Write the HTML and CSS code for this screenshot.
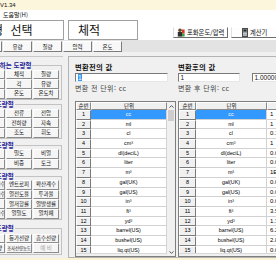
FILE: index.html
```html
<!DOCTYPE html>
<html lang="ko">
<head>
<meta charset="utf-8">
<title>단위 변환기</title>
<link rel="stylesheet" href="styles.css">
</head>
<body>
<div class="titlebar">V1.34</div>
<div class="menubar">도움말(H)</div>

<div class="header">
	<div class="hbox sel"><span>도량형 선택</span></div>
	<div class="hbox cur">체적</div>
	<div class="hbtns">
		<button class="hbtn sat">
			<svg width="8" height="9" viewBox="0 0 8 9"><circle cx="3" cy="2.2" r="1.8" fill="#6b4a2a"/><rect x="0.8" y="4" width="4.4" height="4.6" fill="#2f2f2f"/><rect x="5" y="1.5" width="2.6" height="4" fill="#d83a2a"/><rect x="5" y="5.5" width="2.6" height="3" fill="#3aa03a"/></svg>
			포화온도/압력
		</button>
		<button class="hbtn calc">
			<svg width="6" height="9" viewBox="0 0 6 9"><rect x="0.5" y="0.5" width="5" height="8" fill="#9a9a9a" stroke="#4a4a4a"/><rect x="1.5" y="1.5" width="3" height="2" fill="#2a2a2a"/><path d="M1.5 5.3h1M3.5 5.3h1M1.5 7.1h1M3.5 7.1h1" stroke="#fff"/></svg>
			계산기
		</button>
	</div>
</div>

<div class="tabs">
	<button class="tab cut">길이</button>
	<button class="tab">유량</button>
	<button class="tab">질량</button>
	<button class="tab">압력</button>
	<button class="tab">온도</button>
</div>

<div class="main">
	<div class="left">
		<div class="group g1">
			<div class="gtitle">자주 사용하는 도량형</div>
			<div class="gbtns">
				<button>길이</button><button>체적</button><button>질량</button>
				<button>면적</button><button>각</button><button>유량</button>
				<button>속도</button><button>온도</button><button>온도차</button>
			</div>
		</div>
		<div class="group g2">
			<div class="gtitle">전기 도량형</div>
			<div class="gbtns">
				<button>전력</button><button>전류</button><button>전압</button>
				<button>저항</button><button>전하량</button><button>자속</button>
				<button>광도</button><button>조도</button><button>휘도</button>
			</div>
		</div>
		<div class="group">
			<div class="gtitle">물성 도량형</div>
			<div class="gbtns">
				<button>점도</button><button>밀도</button><button>비열</button>
				<button>열량</button><button>비중</button><button>토크</button>
			</div>
		</div>
		<div class="group">
			<div class="gtitle">열전 도량형</div>
			<div class="gbtns">
				<button>열전달계수</button><button>엔트로피</button><button>확산계수</button>
				<button>열팽창계수</button><button>열전도율</button><button>투과율</button>
				<button>열용량</button><button>열저항률</button><button>열발생률</button>
				<button>열흡수계수</button><button>열밀도</button><button>열차폐</button>
			</div>
		</div>
		<div class="group g5">
			<div class="gtitle">방사 도량형</div>
			<div class="gbtns">
				<button>방사능</button><button>등가선량</button><button>흡수선량</button>
				<button>조사선량</button><button class="small">조사선량농도</button><button class="off">예 비</button>
			</div>
		</div>
	</div>

	<div class="right">
		<div class="inputs">
			<div class="ival">
				<div class="ilabel">변환전의 값</div>
				<div class="ibox"><span class="isel">1</span></div>
				<div class="iunit">변환 전 단위: cc</div>
			</div>
			<div class="ival2">
				<div class="ilabel">변환후의 값</div>
				<div class="irow">
					<div class="ibox b2">1</div>
					<div class="ibox b3">1.000000E+00</div>
				</div>
				<div class="iunit">변환 후 단위: cc</div>
			</div>
		</div>

		<div class="tables">
			<div class="tbl tbl-l">
				<div class="tcols">
					<div class="thead"><div class="th">순번</div><div class="th">단위</div></div>
					<div class="tbody">
						<div class="tr sel"><div class="td no">1</div><div class="td unit">cc</div></div>
						<div class="tr"><div class="td no">2</div><div class="td unit">ml</div></div>
						<div class="tr"><div class="td no">3</div><div class="td unit">cl</div></div>
						<div class="tr"><div class="td no">4</div><div class="td unit">cm³</div></div>
						<div class="tr"><div class="td no">5</div><div class="td unit">dl(deciL)</div></div>
						<div class="tr"><div class="td no">6</div><div class="td unit">liter</div></div>
						<div class="tr"><div class="td no">7</div><div class="td unit">m³</div></div>
						<div class="tr"><div class="td no">8</div><div class="td unit">gal(UK)</div></div>
						<div class="tr"><div class="td no">9</div><div class="td unit">gal(US)</div></div>
						<div class="tr"><div class="td no">10</div><div class="td unit">in³</div></div>
						<div class="tr"><div class="td no">11</div><div class="td unit">ft³</div></div>
						<div class="tr"><div class="td no">12</div><div class="td unit">yd³</div></div>
						<div class="tr"><div class="td no">13</div><div class="td unit">barrel(US)</div></div>
						<div class="tr"><div class="td no">14</div><div class="td unit">bushel(US)</div></div>
						<div class="tr"><div class="td no">15</div><div class="td unit">liq.qt(US)</div></div>
					</div>
					<div class="hbar"></div>
				</div>
				<div class="vscroll">
					<div class="arrow"><svg width="5" height="3" viewBox="0 0 5 3"><path d="M0.5 2.6L2.5 0.6L4.5 2.6" fill="none" stroke="#555"/></svg></div>
					<div class="thumb"></div>
					<div class="track"></div>
					<div class="arrow"><svg width="5" height="3" viewBox="0 0 5 3"><path d="M0.5 0.4L2.5 2.4L4.5 0.4" fill="none" stroke="#555"/></svg></div>
				</div>
			</div>

			<div class="tbl tbl-r">
				<div class="tcols">
					<div class="thead"><div class="th">순번</div><div class="th">단위</div><div class="th">값</div></div>
					<div class="tbody">
						<div class="tr sel"><div class="td no">1</div><div class="td unit">cc</div><div class="td val">1</div></div>
						<div class="tr"><div class="td no">2</div><div class="td unit">ml</div><div class="td val">1</div></div>
						<div class="tr"><div class="td no">3</div><div class="td unit">cl</div><div class="td val">0.1</div></div>
						<div class="tr"><div class="td no">4</div><div class="td unit">cm³</div><div class="td val">1</div></div>
						<div class="tr"><div class="td no">5</div><div class="td unit">dl(deciL)</div><div class="td val">0.01</div></div>
						<div class="tr"><div class="td no">6</div><div class="td unit">liter</div><div class="td val">0.001</div></div>
						<div class="tr"><div class="td no">7</div><div class="td unit">m³</div><div class="td val">1E-06</div></div>
						<div class="tr"><div class="td no">8</div><div class="td unit">gal(UK)</div><div class="td val">0.00022</div></div>
						<div class="tr"><div class="td no">9</div><div class="td unit">gal(US)</div><div class="td val">0.000264</div></div>
						<div class="tr"><div class="td no">10</div><div class="td unit">in³</div><div class="td val">0.061024</div></div>
						<div class="tr"><div class="td no">11</div><div class="td unit">ft³</div><div class="td val">3.53E-05</div></div>
						<div class="tr"><div class="td no">12</div><div class="td unit">yd³</div><div class="td val">1.31E-06</div></div>
						<div class="tr"><div class="td no">13</div><div class="td unit">barrel(US)</div><div class="td val">6.29E-06</div></div>
						<div class="tr"><div class="td no">14</div><div class="td unit">bushel(US)</div><div class="td val">2.84E-05</div></div>
						<div class="tr"><div class="td no">15</div><div class="td unit">liq.qt(US)</div><div class="td val">0.001057</div></div>
					</div>
					<div class="hbar"></div>
				</div>
			</div>
		</div>
	</div>
</div>
<div class="status"></div>
</body>
</html>
```

FILE: styles.css
```css
*{ margin:0; padding:0; box-sizing:border-box; }
body{ width:276px; height:260px; overflow:hidden; background:#f0f0f0; font-family:"Noto Sans CJK KR","Liberation Sans",sans-serif; color:#111; }
button{ font:inherit; color:inherit; background:none; border:0; }

.titlebar{ height:10px; line-height:10px; background:#fcf6dc; font:6px/10px "Liberation Sans",sans-serif; }
.menubar{ height:10px; line-height:10px; background:#fff; font-size:6px; padding-left:3px; }

.header{ display:flex; height:20px; background:#fff; }
.hbox{ border:1px solid #a0a0a0; font-size:12px; line-height:17px; white-space:nowrap; overflow:hidden; }
.hbox.sel{ width:64px; border-left:0; }
.hbox.sel span{ margin-left:-30px; word-spacing:4px; }
.hbox.cur{ width:70px; margin-left:4px; padding-left:9px; }
.hbtns{ display:flex; gap:3px; margin:0 -3px 0 auto; padding-top:7px; }
.hbtn{ display:flex; align-items:center; gap:2px; height:11px; padding-left:3px; font-size:6.3px; background:#fdfdfd; border:1px solid; border-color:#fff #6e6e6e #6e6e6e #e0e0e0; }
.hbtn.sat{ width:55px; }
.hbtn.calc{ width:48px; padding-left:10px; }

.tabs{ display:flex; gap:1px; height:12px; padding-top:1px; background:#e3e3e3; }
.tab{ width:29px; height:11px; flex:none; font-size:5.5px; background:#f8f8f8; border:1px solid; border-color:#fff #7c7c7c #7c7c7c #fff; }
.tab.cut{ margin-left:-27px; }

.main{ display:flex; height:206px; padding-top:4px; }

.left{ width:63px; flex:none; overflow:hidden; border-top:1px solid #c8c8c8; }
.group{ margin:5.5px 1px 0 -24px; border:1px solid #c2c2c2; padding-bottom:.5px; }
.group.g1{ margin-top:8px; }
.group.g2{ margin-top:4px; }
.group.g5{ margin-top:7.5px; }
.gtitle{ display:table; margin:-5px 0 0 4px; padding:0 1px; height:8px; line-height:8px; font-size:6.5px; font-weight:bold; color:#1f2398; white-space:nowrap; background:#f0f0f0; }
.g1 .gtitle{ margin-left:-4px; }
.gbtns{ display:grid; grid-template-columns:repeat(3,26px); grid-auto-rows:9.7px; column-gap:1px; margin-left:2px; padding-top:.5px; }
.g5 .gbtns{ padding-top:2px; }
.gbtns button{ font-size:5.5px; line-height:7px; background:#f5f5f5; border:1px solid; border-color:#fff #8c8c8c #8c8c8c #fff; white-space:nowrap; overflow:hidden; }
.gbtns button.small{ font-size:4.3px; }
.gbtns button.off{ color:#a8a8a8; }

.right{ width:240px; flex:none; margin-left:5px; border:1px solid #b4b4b4; padding:6px 0 0 6px; }
.inputs{ display:flex; gap:10px; }
.ival{ width:93px; }
.ival2{ width:110px; }
.ilabel{ font-size:7.3px; font-weight:bold; line-height:9px; letter-spacing:.3px; white-space:nowrap; }
.ibox{ height:9.5px; margin-top:.5px; background:#fff; border:1px solid; border-color:#7a7a7a #e6e6e6 #e6e6e6 #7a7a7a; font:6.5px/7.5px "Liberation Sans",sans-serif; padding-left:1.5px; white-space:nowrap; overflow:hidden; }
.isel{ background:#3399ff; color:#fff; padding:0 .5px; }
.irow{ display:flex; gap:12px; }
.b2{ width:62px; }
.b3{ width:34px; }
.iunit{ font-size:7px; line-height:9px; margin-top:1.5px; color:#444; letter-spacing:.4px; white-space:nowrap; }

.tables{ display:flex; gap:2px; margin-top:8.5px; height:156px; }
.tbl{ display:flex; border:1px solid #7e7e7e; background:#fff; flex:none; }
.tbl-l{ width:101px; }
.tbl-r{ width:130px; }
.tcols{ flex:1; display:flex; flex-direction:column; min-width:0; }
.thead, .tr{ display:grid; }
.tbl-l .thead, .tbl-l .tr{ grid-template-columns:15px 76px; }
.tbl-r .thead, .tbl-r .tr{ grid-template-columns:17px 71px 40px; }
.thead{ height:8px; }
.th{ background:#f0f0f0; border:1px solid; border-color:#fff #8a8a8a #8a8a8a #fff; font-size:5.5px; line-height:6px; text-align:center; }
.tbody{ height:143px; overflow:hidden; }
.tr{ height:9.7px; }
.td{ border-right:1px solid #d2d2d2; border-bottom:1px solid #d2d2d2; font:5.3px/8.7px "Liberation Sans",sans-serif; text-align:center; white-space:nowrap; overflow:hidden; color:#000; }
.td.no{ background:#f0f0f0; border:1px solid; border-color:#fff #7a7a7a #7a7a7a #fff; line-height:7.7px; font-size:5.5px; }
.tr.sel .td.unit{ background:#3399ff; color:#fff; }
.td.val{ text-align:left; padding-left:3px; font-size:6px; }
.hbar{ flex:1; background:#f0f0f0; border-top:1px solid #d8d8d8; }

.vscroll{ width:8px; flex:none; display:flex; flex-direction:column; background:#f0f0f0; }
.arrow{ height:8px; display:flex; align-items:center; justify-content:center; }
.thumb{ height:11px; margin:0 1px; background:#cdcdcd; }
.track{ flex:1; }

.status{ height:2px; background:#fcf3d4; }
```
